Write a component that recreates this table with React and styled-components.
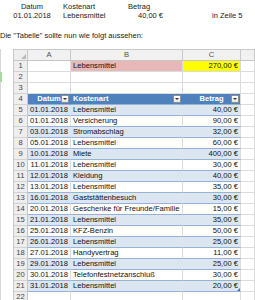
import React from 'react'
import styled, { createGlobalStyle } from 'styled-components'

const GlobalStyle = createGlobalStyle`
  html, body { margin: 0; padding: 0; background: #fff; }
  body { font-family: "Liberation Sans", Arial, sans-serif; }
`

const Page = styled.div`
  width: 255px;
  height: 300px;
  overflow: hidden;
  background: #fff;
  display: flex;
  flex-direction: column;
`
const TopInfo = styled.div`
  border-left: 1px solid #d6d6d6;
  padding: 2px 0 8px 0;
  display: grid;
  grid-template-columns: 44px 51px 40px auto;
  column-gap: 9px;
  margin-left: -1px;
  padding-left: 10px;
  grid-auto-rows: 9px;
  font-size: 7.5px;
  line-height: 9px;
  color: #222;
`
const InfoCell = styled.span`
  text-align: ${p => p.$align || 'left'};
  padding-left: ${p => p.$indent || 0}px;
  margin-left: ${p => p.$shift || 0}px;
  white-space: nowrap;
`
const Caption = styled.div`
  font-size: 7.5px;
  line-height: 9px;
  color: #222;
  margin-top: 3px;
  white-space: nowrap;
`
const SheetArea = styled.div`
  display: flex;
  margin-top: 9px;
  flex: 1;
`
const Gutter = styled.div`
  width: 13px;
  flex: none;
  display: flex;
`
const GutterBar = styled.div`
  width: 1px;
  background: #d6d6d6;
  display: flex;
  flex-direction: column;
`
const GreenMark = styled.div`
  width: 2px;
  height: 10px;
  margin-top: 23px;
  background: #a9d8a2;
`
const Sheet = styled.div`
  flex: 1;
  display: grid;
  grid-template-columns: 14px 43px 112px 58px 1fr;
  grid-auto-rows: 11px;
  border-top: 1px solid #c9c9c9;
  border-left: 1px solid #c9c9c9;
  font-size: 7.6px;
  line-height: 10px;
`

const tones = {
  corner: { bg: '#eeeeee', right: '#c6c6c6', bottom: '#c6c6c6', color: '#555' },
  head: { bg: '#f1f1f1', right: '#c9c9c9', bottom: '#c6c6c6', color: '#505050' },
  rowhead: { bg: '#eeeeee', right: '#c6c6c6', bottom: '#d2d2d2', color: '#444' },
  plain: { bg: '#ffffff', right: '#dadcdd', bottom: '#dadcdd', color: '#111' },
  pink: { bg: '#e6b8b7', right: '#e6b8b7', bottom: '#dadcdd', color: '#111' },
  yellow: { bg: '#ffff00', right: '#dadcdd', bottom: '#dadcdd', color: '#111' },
  blue: { bg: '#4f81bd', right: '#4f81bd', bottom: '#95b3d7', color: '#ffffff' },
  band: { bg: '#dce6f1', right: '#dce6f1', bottom: '#95b3d7', color: '#111' },
  row: { bg: '#ffffff', right: '#dadcdd', bottom: '#95b3d7', color: '#111' },
}

const Cell = styled.div`
  position: relative;
  box-sizing: border-box;
  background: ${p => tones[p.$tone].bg};
  color: ${p => tones[p.$tone].color};
  border-right: 1px solid ${p => p.$edge ? '#dadcdd' : tones[p.$tone].right};
  border-bottom: 1px solid ${p => tones[p.$tone].bottom};
  text-align: ${p => p.$align || 'left'};
  font-weight: ${p => p.$bold ? 700 : 400};
  padding: 0 2px;
  white-space: nowrap;
  overflow: visible;
  z-index: ${p => p.$over ? 1 : 0};
`
const CornerMark = styled.div`
  position: absolute;
  right: 1px;
  bottom: 1px;
  width: 0;
  height: 0;
  border-left: 5px solid transparent;
  border-bottom: 5px solid #b9b9b9;
`
const DropButton = styled.div`
  position: absolute;
  right: 1px;
  top: 1px;
  width: 8px;
  height: 8px;
  box-sizing: border-box;
  background: linear-gradient(#ffffff, #e6e6e6);
  border: 1px solid #8e8e8e;
  display: flex;
  align-items: center;
  justify-content: center;
  &::after {
    content: '';
    border-left: 2px solid transparent;
    border-right: 2px solid transparent;
    border-top: 2px solid #333;
  }
`
const ResizeHandle = styled.div`
  position: absolute;
  right: 0;
  bottom: 0;
  width: 0;
  height: 0;
  border-left: 3px solid transparent;
  border-bottom: 3px solid #3f6fb5;
`

const rows = [
  ['01.01.2018', 'Lebensmittel', '40,00 €'],
  ['01.01.2018', 'Versicherung', '90,00 €'],
  ['03.01.2018', 'Stromabschlag', '32,00 €'],
  ['05.01.2018', 'Lebensmittel', '60,00 €'],
  ['10.01.2018', 'Miete', '400,00 €'],
  ['11.01.2018', 'Lebensmittel', '30,00 €'],
  ['12.01.2018', 'Kleidung', '40,00 €'],
  ['13.01.2018', 'Lebensmittel', '35,00 €'],
  ['16.01.2018', 'Gaststättenbesuch', '30,00 €'],
  ['20.01.2018', 'Geschenke für Freunde/Familie', '15,00 €'],
  ['21.01.2018', 'Lebensmittel', '35,00 €'],
  ['25.01.2018', 'KFZ-Benzin', '50,00 €'],
  ['26.01.2018', 'Lebensmittel', '25,00 €'],
  ['27.01.2018', 'Handyvertrag', '11,00 €'],
  ['29.01.2018', 'Lebensmittel', '25,00 €'],
  ['30.01.2018', 'Telefonfestnetzanschluß', '30,00 €'],
  ['31.01.2018', 'Lebensmittel', '20,00 €'],
]

const EmptyRow = ({ n }) => (
  <>
    <Cell $tone="rowhead" $align="center">{n}</Cell>
    <Cell $tone="plain" />
    <Cell $tone="plain" />
    <Cell $tone="plain" />
    <Cell $tone="plain" />
  </>
)

export default function App() {
  return (
    <Page>
      <GlobalStyle />
      <TopInfo>
        <InfoCell $align="center">Datum</InfoCell>
        <InfoCell>Kostenart</InfoCell>
        <InfoCell $indent={5}>Betrag</InfoCell>
        <InfoCell />
        <InfoCell $align="center">01.01.2018</InfoCell>
        <InfoCell>Lebensmittel</InfoCell>
        <InfoCell $align="right">40,00 €</InfoCell>
        <InfoCell $shift={40}>in Zeile 5</InfoCell>
      </TopInfo>
      <Caption>Die "Tabelle" sollte nun wie folgt aussehen:</Caption>
      <SheetArea>
        <Gutter>
          <GutterBar>
            <GreenMark />
          </GutterBar>
        </Gutter>
        <Sheet>
          <Cell $tone="corner"><CornerMark /></Cell>
          <Cell $tone="head" $align="center">A</Cell>
          <Cell $tone="head" $align="center">B</Cell>
          <Cell $tone="head" $align="center">C</Cell>
          <Cell $tone="head" />

          <Cell $tone="rowhead" $align="center">1</Cell>
          <Cell $tone="plain" />
          <Cell $tone="pink" $edge>Lebensmittel</Cell>
          <Cell $tone="yellow" $align="right">270,00 €</Cell>
          <Cell $tone="plain" />

          <EmptyRow n={2} />
          <EmptyRow n={3} />

          <Cell $tone="rowhead" $align="center">4</Cell>
          <Cell $tone="blue" $bold $align="center">Datum<DropButton /></Cell>
          <Cell $tone="blue" $bold>Kostenart<DropButton /></Cell>
          <Cell $tone="blue" $bold $align="center" $edge>Betrag<DropButton /></Cell>
          <Cell $tone="plain" />

          {rows.map(([date, kind, amount], i) => {
            const tone = i % 2 === 0 ? 'band' : 'row'
            const last = i === rows.length - 1
            return (
              <React.Fragment key={i}>
                <Cell $tone="rowhead" $align="center">{i + 5}</Cell>
                <Cell $tone={tone} $align="right">{date}</Cell>
                <Cell $tone={tone} $over>{kind}</Cell>
                <Cell $tone={tone} $align="right" $edge>
                  {amount}
                  {last && <ResizeHandle />}
                </Cell>
                <Cell $tone="plain" />
              </React.Fragment>
            )
          })}

          <EmptyRow n={22} />
        </Sheet>
      </SheetArea>
    </Page>
  )
}
